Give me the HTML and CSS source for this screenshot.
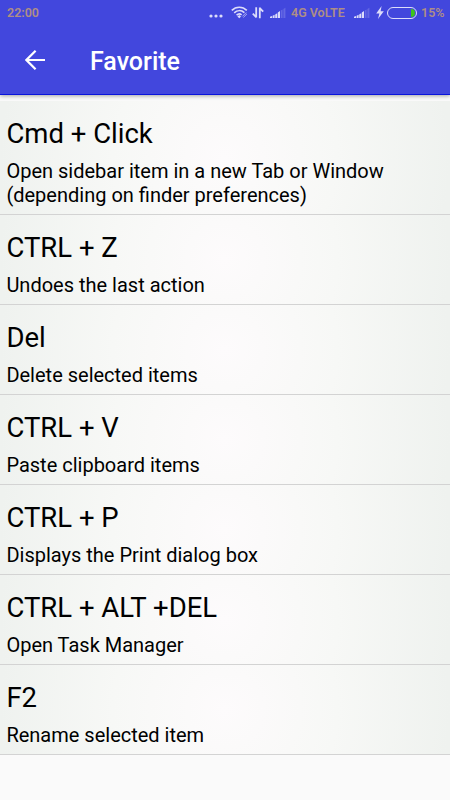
FILE: index.html
```html
<!DOCTYPE html>
<html lang="en">

<head>
    <meta charset="UTF-8">
    <meta name="viewport" content="width=device-width, initial-scale=1.0">
    <title>Favorite</title>

    <link rel="stylesheet" href="styles.css">
</head>

<body>
    <header class="header">
        <div class="status-bar">
            <span class="time">22:00</span>
            <div class="status-icons">
                <svg class="dots" width="14" height="20" viewBox="0 0 14 20">
                    <circle cx="2" cy="16" r="1.6" />
                    <circle cx="7" cy="16" r="1.6" />
                    <circle cx="12" cy="16" r="1.6" />
                </svg>
                <svg class="wifi" width="17" height="20" viewBox="0 0 17 20">
                    <path d="M0.8 10.4C5 6.2 11.6 6.2 15.8 10.4M3.2 12.8C6.2 10 10.4 10 13.4 12.6M5.6 15.2C7.2 13.7 9.2 13.7 10.6 14.8" />
                    <path class="fill" d="M6.4 16.4L8.3 15L10 16.4L8.3 18.2Z" />
                    <path class="thin" d="M11.4 16.4L15.2 12.6M12.4 17.4L16 13.8" />
                </svg>
                <svg class="data" width="12" height="20" viewBox="0 0 12 20">
                    <path d="M4.2 7.2V17.6M4.4 17.4L0.8 13.6M7.8 18.2V7.6M7.6 8L11.2 11.6" />
                </svg>
                <svg class="signal" width="16" height="20" viewBox="0 0 16 20">
                    <path d="M0 18V16.8L2 16V18ZM2.6 18V15.8L4.6 14.8V18ZM5.2 18V14.4L7.2 13.2V18ZM7.8 18V12.6L10 11V18Z" />
                    <path class="off" d="M10.8 18V10.6L12.6 9.4V18ZM13.4 18V9L15.4 7.8V18Z" />
                </svg>
                <span class="network">4G VoLTE</span>
                <svg class="signal" width="16" height="20" viewBox="0 0 16 20">
                    <path d="M0 18V16.8L2 16V18ZM2.6 18V15.8L4.6 14.8V18ZM5.2 18V14.4L7.2 13.2V18ZM7.8 18V12.6L10 11V18Z" />
                    <path class="off" d="M10.8 18V10.6L12.6 9.4V18ZM13.4 18V9L15.4 7.8V18Z" />
                </svg>
                <svg class="bolt" width="8" height="20" viewBox="0 0 8 20">
                    <path d="M5.6 6L0.2 13.4H3.4L2 19L7.8 11.2H4.6Z" />
                </svg>
                <div class="battery">
                    <div class="level"></div>
                </div>
                <span class="percent">15%</span>
            </div>
        </div>
        <div class="toolbar">
            <svg class="back" width="20" height="20" viewBox="0 0 20 20">
                <path d="M20 10H1.8M10.6 0.8L1.4 10L10.6 19.2" />
            </svg>
            <h1>Favorite</h1>
        </div>
    </header>

    <ul class="list">
        <li class="item">
            <h2>Cmd + Click</h2>
            <p>Open sidebar item in a new Tab or Window (depending on finder preferences)</p>
        </li>
        <li class="item">
            <h2>CTRL + Z</h2>
            <p>Undoes the last action</p>
        </li>
        <li class="item">
            <h2>Del</h2>
            <p>Delete selected items</p>
        </li>
        <li class="item">
            <h2>CTRL + V</h2>
            <p>Paste clipboard items</p>
        </li>
        <li class="item">
            <h2>CTRL + P</h2>
            <p>Displays the Print dialog box</p>
        </li>
        <li class="item">
            <h2>CTRL + ALT +DEL</h2>
            <p>Open Task Manager</p>
        </li>
        <li class="item">
            <h2>F2</h2>
            <p>Rename selected item</p>
        </li>
    </ul>
</body>

</html>
```

FILE: styles.css
```css
* {
    box-sizing: border-box;
    margin: 0;
    padding: 0;
}

body {
    height: 800px;
    overflow: hidden;
    background-color: #fafafa;
    color: #000;
    font-family: Roboto, sans-serif;
}

.header {
    height: 95px;
    background-color: #4247dd;
    border-bottom: 1px solid #0a14dc;
    box-shadow: 0 1px 4px rgba(0, 0, 0, 0.35);
}

.status-bar {
    height: 26px;
    padding: 0 7px;
    display: flex;
    justify-content: space-between;
    font-size: 12.5px;
    font-weight: 600;
    line-height: 26px;
    color: #ae8e86;
}

.status-icons {
    display: flex;
}

.status-icons svg {
    display: block;
    flex-shrink: 0;
    fill: #dcdcfa;
}

.dots {
    margin-right: 8px;
}

.status-icons .wifi {
    fill: none;
    stroke: #dcdcfa;
    stroke-width: 1.6;
    margin-right: 4px;
}

.wifi .fill {
    fill: #dcdcfa;
    stroke: none;
}

.wifi .thin {
    stroke-width: 1;
    opacity: 0.7;
}

.status-icons .data {
    fill: none;
    stroke: #dcdcfa;
    stroke-width: 1.8;
    margin-right: 6px;
}

.signal {
    margin-right: 5px;
}

.signal .off {
    opacity: 0.22;
}

.network {
    width: 56px;
    margin-right: 7px;
    white-space: nowrap;
}

.bolt {
    margin: 0 3px 0 1px;
}

.battery {
    width: 30px;
    height: 12px;
    margin: 7px 4px 0 0;
    border: 1px solid #dcdcfa;
    border-radius: 6px;
    padding: 1px;
    display: flex;
    justify-content: flex-end;
}

.level {
    width: 4px;
    background-color: #3ec41c;
    border-radius: 0 4px 4px 0;
}

.percent {
    width: 22px;
}

.toolbar {
    height: 68px;
    padding-left: 25px;
    display: flex;
    align-items: center;
}

.back {
    fill: none;
    stroke: #fff;
    stroke-width: 2.2;
    margin-right: 45px;
}

.toolbar h1 {
    padding-top: 3px;
    font-size: 25px;
    font-weight: 500;
    line-height: 30px;
    color: #fff;
}

.list {
    margin-top: 6px;
    list-style: none;
}

.item {
    padding: 16px 7px 7px 6.4px;
    border-bottom: 1px solid #d3d3d3;
    background: radial-gradient(circle 225px at center, #fdfbfc 0%, #f7f8f6 50%, #eff2ef 100%);
}

.item h2 {
    font-size: 27.5px;
    font-weight: 400;
    line-height: 33px;
}

.item p {
    margin-top: 9px;
    font-size: 20px;
    line-height: 24px;
}
```
